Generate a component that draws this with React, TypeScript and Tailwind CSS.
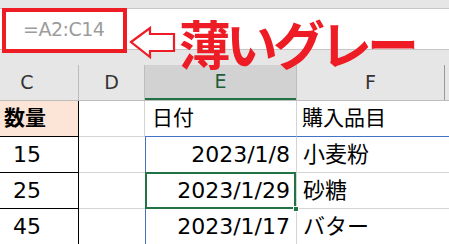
const font = 'font-["DejaVu_Sans","Noto_Sans_CJK_JP",sans-serif]'

const rows = [
  { qty: '15', date: '2023/1/8', item: '小麦粉' },
  { qty: '25', date: '2023/1/29', item: '砂糖', selected: true },
  { qty: '45', date: '2023/1/17', item: 'バター' },
]

function ArrowLeft() {
  return (
    <svg width="48" height="34" viewBox="0 0 48 34" className="absolute left-[129px] top-[26px]">
      <path
        d="M2 16 L21 2 L21 8 L45 8 L45 25 L21 25 L21 31 Z"
        fill="#ffffff"
        stroke="#ee1c25"
        strokeWidth="2.2"
        strokeLinejoin="miter"
      />
    </svg>
  )
}

export default function App() {
  return (
    <div className={`relative h-[244px] w-[449px] overflow-hidden bg-white text-black ${font}`}>
      {/* formula bar */}
      <div className="h-[9px] border-b border-[#c6c6c6] bg-[#e6e6e6]" />
      <div className="flex h-[41px] items-center border-b border-[#c6c6c6] bg-white pl-[23px]">
        <span className="text-[19px] leading-none tracking-[-0.5px] text-[#9c9c9c]">=A2:C14</span>
      </div>
      <div className="h-[15px] bg-[#e6e6e6]" />

      {/* column headers */}
      <div className="flex h-[36px] border-b border-[#bdbdbd] bg-[#e6e6e6] text-[19px] text-[#333]">
        <div className="flex w-[79px] items-center justify-center border-r border-[#bdbdbd] pr-[24px]">C</div>
        <div className="flex w-[66px] items-center justify-center border-r border-[#bdbdbd]">D</div>
        <div className="flex w-[151px] items-center justify-center border-b-2 border-b-[#217346] bg-[#d2d2d2] text-[#1e5e3a]">
          E
        </div>
        <div className="flex w-[149px] items-center justify-center border-l border-r border-[#bdbdbd] border-r-[#9a9a9a]">
          F
        </div>
      </div>

      {/* row 1: table headers */}
      <div className="flex h-[36px] text-[21px]">
        <div className="flex w-[79px] items-center border-b border-r border-black bg-[#fce4d6] pl-[4px] font-bold">
          数量
        </div>
        <div className="w-[66px] border-b border-r border-[#d4d4d4]" />
        <div className="flex w-[151px] items-center border-b border-[#4472c4] pl-[7px]">日付</div>
        <div className="flex w-[153px] items-center border-b border-l border-[#4472c4] border-l-[#d4d4d4] pl-[5px]">
          購入品目
        </div>
      </div>

      {rows.map((r) => (
        <div key={r.qty} className="flex h-[36px] text-[22px]">
          <div className="flex w-[79px] items-center justify-center border-b border-r border-black pr-[24px]">
            {r.qty}
          </div>
          <div className="w-[66px] border-b border-[#d4d4d4]" />
          <div className="relative flex w-[151px] items-center justify-end border-b border-l border-[#d4d4d4] border-l-[#4472c4] pr-[6px]">
            {r.date}
            {r.selected && (
              <>
                <div className="absolute -left-px -top-px bottom-[-1px] right-0 border-2 border-[#217346]" />
                <div className="absolute bottom-[-4px] right-[-3px] h-[6px] w-[6px] border border-white bg-[#217346]" />
              </>
            )}
          </div>
          <div className="flex w-[153px] items-center border-b border-l border-[#d4d4d4] pl-[6px]">{r.item}</div>
        </div>
      ))}

      {/* annotation */}
      <div className="absolute left-[2px] top-[8px] h-[45px] w-[125px] border-4 border-[#ee1c25]" />
      <ArrowLeft />
      <div className="absolute left-[179px] top-[17px] font-['Noto_Sans_CJK_JP',sans-serif] text-[52px] font-bold leading-none tracking-[-5px] text-[#ee1c25]">
        薄いグレー
      </div>
    </div>
  )
}
